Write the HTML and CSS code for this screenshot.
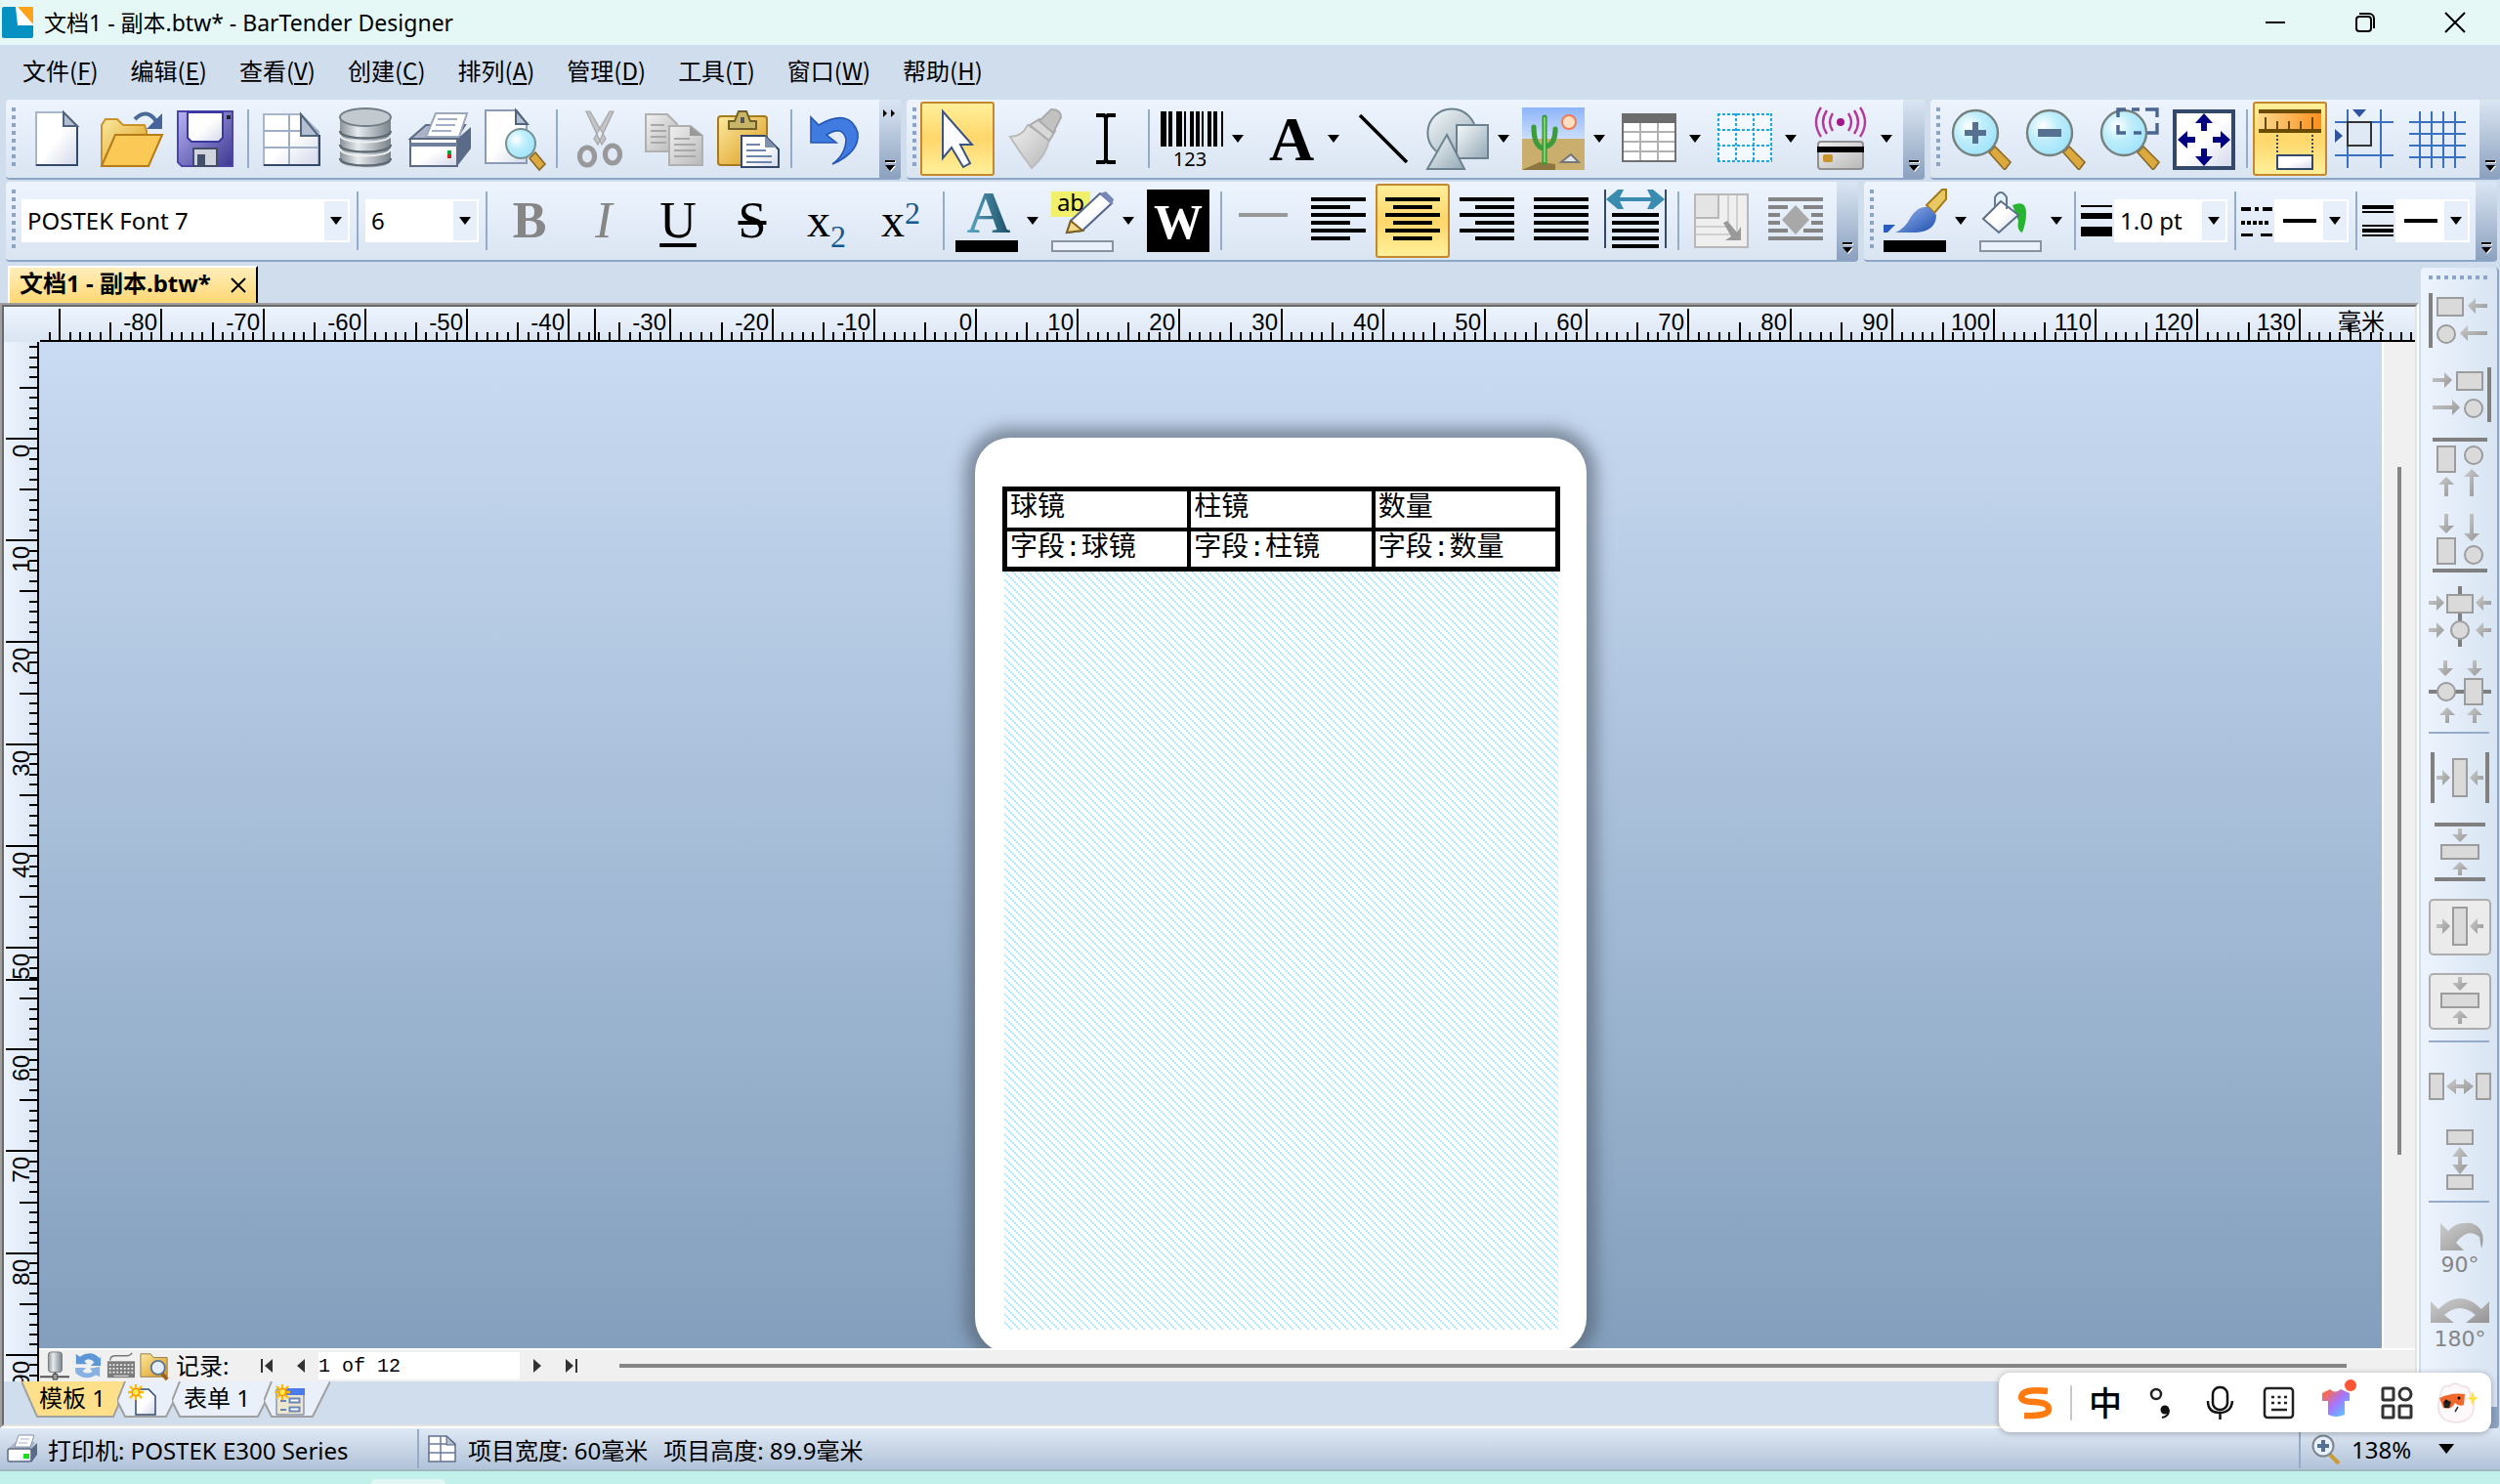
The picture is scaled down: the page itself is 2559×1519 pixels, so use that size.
FILE: index.html
```html
<!DOCTYPE html>
<html lang="zh-CN">
<head>
    <meta charset="UTF-8">
    <meta name="viewport" content="width=device-width, initial-scale=1.0">
    <title>文档1 - 副本.btw* - BarTender Designer</title>
    <link rel="stylesheet" href="styles.css">
</head>
<body>
    <!-- shared gradients and symbols -->
    <svg class="defs" aria-hidden="true">
        <defs>
            <linearGradient id="paper" x1="0" y1="0" x2="1" y2="1"><stop offset="0.5" stop-color="#fff"/><stop offset="1" stop-color="#d3d8ea"/></linearGradient>
            <linearGradient id="gold" x1="0" y1="0" x2="1" y2="1"><stop offset="0" stop-color="#fbe9a0"/><stop offset="1" stop-color="#dc9a1a"/></linearGradient>
            <linearGradient id="violet" x1="0" y1="0" x2="1" y2="1"><stop offset="0" stop-color="#b9b4f6"/><stop offset="1" stop-color="#3d3792"/></linearGradient>
            <linearGradient id="steel" x1="0" y1="0" x2="1" y2="0"><stop offset="0" stop-color="#8b9297"/><stop offset="0.35" stop-color="#e6ebee"/><stop offset="1" stop-color="#78828a"/></linearGradient>
            <linearGradient id="shape" x1="0" y1="0" x2="1" y2="1"><stop offset="0" stop-color="#f6fafc"/><stop offset="1" stop-color="#93a8b4"/></linearGradient>
            <linearGradient id="grey" x1="0" y1="0" x2="1" y2="1"><stop offset="0" stop-color="#f0f0f0"/><stop offset="1" stop-color="#b8b8b8"/></linearGradient>
            <linearGradient id="arrow" x1="0" y1="0" x2="1" y2="1"><stop offset="0" stop-color="#cdcdcd"/><stop offset="1" stop-color="#949494"/></linearGradient>
            <linearGradient id="blue" x1="0" y1="0" x2="1" y2="1"><stop offset="0" stop-color="#9db8f2"/><stop offset="1" stop-color="#1d4fae"/></linearGradient>
            <linearGradient id="teal" x1="0" y1="0" x2="1" y2="0"><stop offset="0" stop-color="#5aa9c9"/><stop offset="1" stop-color="#1c4c62"/></linearGradient>
            <linearGradient id="orange" x1="0" y1="0" x2="1" y2="0"><stop offset="0" stop-color="#fcd98c"/><stop offset="1" stop-color="#fb8e1e"/></linearGradient>
            <linearGradient id="sky" x1="0" y1="0" x2="0" y2="1"><stop offset="0" stop-color="#8db4fa"/><stop offset="1" stop-color="#cfe1fb"/></linearGradient>
            <linearGradient id="shirt" x1="0" y1="0" x2="1" y2="1"><stop offset="0.1" stop-color="#ff6a3c"/><stop offset="0.5" stop-color="#a773ff"/><stop offset="0.9" stop-color="#5cf"/></linearGradient>
            <radialGradient id="glass" cx="0.35" cy="0.35" r="0.7"><stop offset="0" stop-color="#fff"/><stop offset="0.45" stop-color="#bfeefb"/><stop offset="1" stop-color="#9fe3fb"/></radialGradient>
            <pattern id="hatch" width="8" height="8" patternUnits="userSpaceOnUse"><path d="M0 0h2v2H0zM2 2h2v2H2zM4 4h2v2H4zM6 6h2v2H6z" fill="#aeeaff"/></pattern>
        </defs>
        <symbol id="lens" viewBox="0 0 32 32">
            <path d="M20 23l3-3 8 8-3 4z" fill="#dca93e" stroke="#8a6a2a" stroke-width="0.8"/>
            <circle cx="13" cy="13" r="11.5" fill="url(#glass)" stroke="#76807c" stroke-width="1.2"/>
        </symbol>
        <symbol id="star" viewBox="0 0 16 16">
            <path d="M8 0v16M0 8h16M2 2l12 12M14 2L2 14" stroke="#fb0" stroke-width="2.4"/>
            <circle cx="8" cy="8" r="3.6" fill="#ffe94a" stroke="#ff8a00" stroke-width="1.4"/>
        </symbol>
    </svg>

    <header class="titlebar">
        <svg class="app-icon" viewBox="0 0 32 32"><rect width="32" height="32" rx="2" fill="#0592c3"/><path d="M14 0h18v19H16z" fill="#fff"/><path d="M16 0h16v18z" fill="#fda21b"/></svg>
        <h1 class="title">文档1 - 副本.btw* - BarTender Designer</h1>
        <div class="window-buttons">
            <button class="win-btn" aria-label="最小化"><svg viewBox="0 0 20 20"><path d="M0 10h20"/></svg></button>
            <button class="win-btn" aria-label="还原"><svg viewBox="0 0 20 20"><rect x="1" y="4" width="15" height="15" rx="3"/><path d="M4 1h10a5 5 0 0 1 5 5v10"/></svg></button>
            <button class="win-btn" aria-label="关闭"><svg viewBox="0 0 20 20"><path d="M0 0l20 20M20 0L0 20"/></svg></button>
        </div>
    </header>

    <nav class="menubar">
        <button>文件(<u>F</u>)</button>
        <button>编辑(<u>E</u>)</button>
        <button>查看(<u>V</u>)</button>
        <button>创建(<u>C</u>)</button>
        <button>排列(<u>A</u>)</button>
        <button>管理(<u>D</u>)</button>
        <button>工具(<u>T</u>)</button>
        <button>窗口(<u>W</u>)</button>
        <button>帮助(<u>H</u>)</button>
    </nav>

    <div class="toolbar-row">
        <div class="toolbar toolbar-clipped">
            <span class="grip"></span>
            <button class="tool" aria-label="新建"><svg viewBox="0 0 32 32"><path d="M5.500 2.500h14l7 7v20h-21z" fill="url(#paper)" stroke="#a9b5c9"/><path d="M19.500 2.500v7h7z" fill="#b3bfd3" stroke="#52637c"/><path d="M26.500 10v19.500h-21" fill="none" stroke="#34496a"/></svg></button>
            <button class="tool" aria-label="打开"><svg viewBox="0 0 32 32"><path d="M1 29V9l2-3h6l3 3h11l1 3v17z" fill="url(#gold)" stroke="#c9932a"/><path d="M1 30L8 14h24l-7 16z" fill="#fbc956" stroke="#b57c17"/><path d="M18 6q6-6 11 1" fill="none" stroke="#4b6a9a" stroke-width="2"/><path d="M32 3v8h-8z" fill="#46659a"/></svg></button>
            <button class="tool" aria-label="保存"><svg viewBox="0 0 32 32"><path d="M2 2h28v28H4l-2-2z" fill="url(#violet)" stroke="#4c45a8"/><path d="M7 2.500h18v13l-2 2H9l-2-2z" fill="url(#paper)" stroke="#3b37a0"/><path d="M10 21h12v9H10z" fill="#cfd4dd" stroke="#444c66"/><path d="M12 24h4v6h-4z" fill="#43506b"/><path d="M27 4h2v2h-2z" fill="#222"/></svg></button>
            <span class="sep"></span>
            <button class="tool" aria-label="页面设置"><svg viewBox="0 0 32 32"><path d="M2 3.500h19l9 9v17H2z" fill="url(#paper)" stroke="#a9b5c9"/><path d="M2 12h28M2 20.500h28M15 3.500v26" stroke="#a0aec4" stroke-width="1"/><path d="M21 3.500v11h9z" fill="#b3bfd3" stroke="#52637c"/><path d="M30.500 14v15.500H2" fill="none" stroke="#34496a"/></svg></button>
            <button class="tool" aria-label="数据库"><svg viewBox="0 0 32 32"><path d="M3 5v22c0 5 26 5 26 0V5z" fill="url(#steel)"/><path d="M3 19c0 5 26 5 26 0M3 26c0 5 26 5 26 0M3 12c0 5 26 5 26 0" fill="none" stroke="#5e6b75" stroke-width="1.200"/><path d="M3 21c0 5 26 5 26 0M3 14c0 5 26 5 26 0" fill="none" stroke="#eef2f4"/><ellipse cx="16" cy="5" rx="13" ry="4.500" fill="#c3cacf" stroke="#727d86"/></svg></button>
            <button class="tool" aria-label="打印"><svg viewBox="0 0 32 32"><path d="M1 16l8-7h20l-5 8z" fill="#aab4c6" stroke="#5b6b85"/><path d="M14 3h16l-4 12H9z" fill="#fff" stroke="#9aa7bd"/><path d="M15 6h10M14 9h10M12 12h10" stroke="#9fb0c8"/><path d="M24 17l8-7v11l-7 9z" fill="#5a6b88"/><path d="M1 16h24v14H1z" fill="url(#paper)" stroke="#5b6b85"/><path d="M1 18h24v2H1z" fill="#70809c"/><path d="M20 22h2v2h-2z" fill="#0a3"/><path d="M20 24h2v2h-2z" fill="#c22"/></svg></button>
            <button class="tool" aria-label="打印预览"><svg viewBox="0 0 32 32"><path d="M1.500 1.500h16l5 7v20h-21z" fill="url(#paper)" stroke="#8d9cb5"/><path d="M17 1.500v7h6z" fill="#b3bfd3" stroke="#52637c"/><path d="M24 26l3-3 5 6-3 3z" fill="#dca93e" stroke="#8a6a2a" stroke-width="0.800"/><ellipse cx="19.500" cy="18.500" rx="7.500" ry="7.500" fill="url(#glass)" stroke="#76908c"/></svg></button>
            <span class="sep"></span>
            <button class="tool" aria-label="剪切"><svg viewBox="0 0 32 32"><path d="M9 2l8 17 2-3L11 2zM23 2l-8 17-2-3L21 2z" fill="#c4c4c4" stroke="#a5a5a5" stroke-width="0.600"/><g fill="none" stroke="#999" stroke-width="2.600"><ellipse cx="9.500" cy="25" rx="3.800" ry="4.500"/><ellipse cx="22.500" cy="24" rx="3.800" ry="4.500"/></g></svg></button>
            <button class="tool" aria-label="复制"><svg viewBox="0 0 32 32"><g fill="url(#grey)" stroke="#b0b0b0"><path d="M1.500 3.500h11l5 5v14h-16z"/><path d="M13.500 9.500h11l6 5v15h-17z"/></g><path d="M4 9h7M4 12h8M4 15h8M4 18h8M16 16h8M16 19h11M16 22h11M16 25h11" stroke="#a8a8a8"/><path d="M24 9.500v5h6.500z" fill="#999"/></svg></button>
            <button class="tool" aria-label="粘贴"><svg viewBox="0 0 32 32"><rect x="0.500" y="4.500" width="25" height="25" rx="1.500" fill="url(#gold)" stroke="#a57c1d"/><path d="M6 11V7h3l2-5h4l2 5h3v4z" fill="#c9b467" stroke="#6f602b"/><path d="M12 5h2v3h-2z" fill="#555"/><path d="M12.500 14.500h12l7 7v9h-19z" fill="url(#paper)" stroke="#34496a"/><path d="M24.500 14.500v6h6z" fill="#7f91ac"/><path d="M15 19h7M15 22h10M15 25h13M15 28h13" stroke="#6f86ab"/></svg></button>
            <span class="sep"></span>
            <button class="tool" aria-label="撤消"><svg viewBox="0 0 32 32"><path d="M4 5v13h13l-5-4q8-5 10 2 0 8-7 13 14-6 13-16Q24 0 8 9z" fill="#3f7be0" stroke="#2457b4" stroke-width="0.800"/></svg></button>
            <button class="overflow" aria-label="更多按钮"><svg viewBox="0 0 22 80"><path d="M4 10l4 4-4 4zM12 10l4 4-4 4z" fill="#000"/><path d="M7 63h10v2H7zM7 68h10l-5 6z" class="tri-shadow"/><path d="M6 62h10v2H6zM6 67h10l-5 6z"/></svg></button>
        </div>

        <div class="toolbar">
            <span class="grip"></span>
            <button class="tool active" aria-label="选择"><svg viewBox="0 0 32 32"><path d="M8.500 2v24l4.500-5.500 6 10 3.500-2-5-9.500h6z" fill="#fdfdff" stroke="#3b5480"/></svg></button>
            <button class="tool" aria-label="格式刷"><svg viewBox="0 0 32 32"><path d="M5 15q6 0 9-6l11 7q-1 8-9 15-6-8-11-16z" fill="url(#grey)" stroke="#bbb"/><path d="M15 9l5-3 8 6-3 5z" fill="#d8d8d8" stroke="#aaa"/><path d="M20 7l6-6q5 0 5 4l-4 8z" fill="#c2c2c2" stroke="#aaa"/></svg></button>
            <button class="tool" aria-label="文本光标"><svg viewBox="0 0 32 32"><path d="M11 4h4l1 1 1-1h4M11 28h4l1-1 1 1h4M16 5v22" fill="none" stroke="#000" stroke-width="2"/></svg></button>
            <span class="sep"></span>
            <button class="tool drop" aria-label="条形码"><svg viewBox="0 0 32 32"><path d="M0 2h3v18H0zM4 2h2v18H4zM8 2h3v18H8zM12 2h1v18h-1zM15 2h2v18h-2zM18 2h2v18h-2zM21 2h1v18h-1zM24 2h2v18h-2zM27 2h2v18h-2zM31 2h1v18h-1z"/><text x="15" y="30" font-size="10" text-anchor="middle">123</text></svg><i class="tri"></i></button>
            <button class="tool drop" aria-label="文本"><svg viewBox="0 0 32 32"><text x="18" y="27" class="serif" font-size="32" font-weight="700" text-anchor="middle">A</text></svg><i class="tri"></i></button>
            <button class="tool" aria-label="线条"><svg viewBox="0 0 32 32"><path d="M4 4l24 24" stroke="#000" stroke-width="1.800"/></svg></button>
            <button class="tool drop" aria-label="形状"><svg viewBox="0 0 32 32"><g fill="url(#shape)" stroke="#6d8291"><circle cx="13" cy="13" r="12.300"/><path d="M15.500 9h16v17h-16z"/><path d="M10.500 14l9 17.500h-19z"/></g></svg><i class="tri"></i></button>
            <button class="tool drop" aria-label="图片"><svg viewBox="0 0 32 32"><path d="M0 0h32v17H0z" fill="url(#sky)"/><path d="M0 16h32v16H0z" fill="#c9ae6d"/><path d="M0 32l9-4 8 1v3z" fill="#8d7640"/><circle cx="24" cy="7.500" r="3.500" fill="#fde0c0" stroke="#f37a52"/><path d="M11.500 28V5M11 21q-5-1-5-11M12 20q5-1 5-9" fill="none" stroke="#3c9c3c" stroke-width="2.600" stroke-linecap="round"/><path d="M11.500 28V5" stroke="#7ed36a"/><path d="M20 28l5-4 4 4z" fill="#e3e3ea" stroke="#777"/></svg><i class="tri"></i></button>
            <button class="tool drop" aria-label="表格"><svg viewBox="0 0 32 32"><path d="M2.500 3.500h27v24h-27z" fill="#fff" stroke="#707070"/><path d="M2 3h28v5H2z" fill="#6c6c6c"/><path d="M3 12.500h26M3 17.500h26M3 22.500h26M11.500 8v19M20.500 8v19" stroke="#b0b0b0"/></svg><i class="tri"></i></button>
            <button class="tool drop" aria-label="布局网格"><svg viewBox="0 0 32 32"><path d="M2 3h28v25H2z" fill="#f4f9ff"/><path d="M2 3.500h28M2 11.500h28M2 19.500h28M2 27.500h28M2.500 3v25M11.500 3v25M20.500 3v25M29.500 3v25" stroke="#1ba9e6" stroke-dasharray="1.500 1"/></svg><i class="tri"></i></button>
            <button class="tool drop" aria-label="编码器"><svg viewBox="0 0 32 32"><g fill="none" stroke="#b33a9a" stroke-width="1.200"><path d="M12 3q-3 4.500 0 9M20 3q3 4.500 0 9M9 1.500q-4 6 0 12M23 1.500q4 6 0 12M6 0q-5 7.500 0 15M26 0q5 7.500 0 15"/></g><circle cx="16" cy="7.500" r="2" fill="#a4178a"/><rect x="4.500" y="17.500" width="23" height="14" rx="1.500" fill="url(#grey)" stroke="#909090"/><path d="M4 20h24v3H4z"/><rect x="7" y="24" width="5" height="4" rx="1" fill="#c8932b"/></svg><i class="tri"></i></button>
            <button class="overflow" aria-label="更多按钮"><svg viewBox="0 0 22 80"><path d="M7 63h10v2H7zM7 68h10l-5 6z" class="tri-shadow"/><path d="M6 62h10v2H6zM6 67h10l-5 6z"/></svg></button>
        </div>

        <div class="toolbar">
            <span class="grip"></span>
            <button class="tool" aria-label="放大"><svg viewBox="0 0 32 32"><use href="#lens"/><path d="M11.500 7.500h3v4h4v3h-4v4h-3v-4h-4v-3h4z" fill="#56708f"/></svg></button>
            <button class="tool" aria-label="缩小"><svg viewBox="0 0 32 32"><use href="#lens"/><path d="M7 11h12v4H7z" fill="#56708f"/></svg></button>
            <button class="tool" aria-label="缩放到所选"><svg viewBox="0 0 32 32"><use href="#lens"/><path d="M10 5V1h4M17 1h4M24 1h6v4M30 8v5h-5M22 13h-4M14 13h-4V9" fill="none" stroke="#4a6690" stroke-width="1.700"/></svg></button>
            <button class="tool" aria-label="适合窗口"><svg viewBox="0 0 32 32"><path d="M1 2h30v29H1z" fill="url(#paper)" stroke="#34496a" stroke-width="2"/><path d="M16 3l4.500 5h-3v4h-3V8h-3zM16 30l4.500-5h-3v-4h-3v4h-3zM2.500 16.500l5-4.500v3h4v3h-4v3zM29.500 16.500l-5-4.500v3h-4v3h4v3z" fill="#000080"/></svg></button>
            <span class="sep"></span>
            <button class="tool active" aria-label="标尺"><svg viewBox="0 0 32 32"><path d="M0 2h32v10H0z" fill="url(#orange)"/><path d="M0 1h32v2H0zM0 11h32v2H0z" fill="#6a4b00"/><path d="M3.500 5v6M9.500 7v4M15.500 7v4M21.500 7v4M27.500 5v6" stroke="#6a4b00"/><path d="M9.500 14v10M27.500 14v10" stroke="#34496a" stroke-dasharray="1 1"/><path d="M9.500 24.500h18v7h-18z" fill="url(#paper)" stroke="#34496a"/></svg></button>
            <button class="tool" aria-label="对齐参考线"><svg viewBox="0 0 32 32"><path d="M7.500 1v30M24.500 1v30M1 7.500h30M1 24.500h30" stroke="#3a70c0"/><path d="M10 1h7l-3.500 4zM1 11l4 3.500-4 3.500z" fill="#2f55a0"/><path d="M7.500 7.500h12v12h-12z" fill="#dfe8f5" stroke="#333"/></svg></button>
            <button class="tool" aria-label="网格"><svg viewBox="0 0 32 32"><path d="M6.500 2v29M12.500 2v29M18.500 2v29M24.500 2v29M1 7.500h29M1 13.500h29M1 19.500h29M1 25.500h29" stroke="#3a70c0"/></svg></button>
            <button class="overflow" aria-label="更多按钮"><svg viewBox="0 0 22 80"><path d="M7 63h10v2H7zM7 68h10l-5 6z" class="tri-shadow"/><path d="M6 62h10v2H6zM6 67h10l-5 6z"/></svg></button>
        </div>
    </div>

    <div class="toolbar-row">
        <div class="toolbar">
            <span class="grip"></span>
            <label class="combo combo-font"><select aria-label="字体"><option>POSTEK Font 7</option></select><span class="combo-arrow"><i class="tri"></i></span></label>
            <span class="sep"></span>
            <label class="combo"><select aria-label="字号"><option>6</option></select><span class="combo-arrow"><i class="tri"></i></span></label>
            <span class="sep"></span>
            <button class="tool glyph dim bold">B</button>
            <button class="tool glyph dim italic">I</button>
            <button class="tool glyph under">U</button>
            <button class="tool glyph strike">S</button>
            <button class="tool glyph script">x<sub>2</sub></button>
            <button class="tool glyph script">x<sup>2</sup></button>
            <span class="sep"></span>
            <button class="tool drop" aria-label="字体颜色"><svg viewBox="0 0 32 32"><text x="17" y="22" class="serif" font-size="31" font-weight="700" text-anchor="middle" fill="url(#teal)">A</text><path d="M0 26h32v6H0z"/></svg><i class="tri"></i></button>
            <button class="tool drop" aria-label="突出显示"><svg viewBox="0 0 32 32"><path d="M0 1h20v13H0z" fill="#f0f06a"/><text x="10" y="11" font-size="12" text-anchor="middle">ab</text><path d="M8 22l2-6L25 2l6 5-15 14z" fill="url(#paper)" stroke="#55648c"/><path d="M8 22l2-6 6 5z" fill="#f5d888" stroke="#7d6222"/><path d="M25 2l3-1 4 4-1 3z" fill="#7886b8"/><path d="M0.500 26.500h31v5h-31z" fill="#ebf1fa" stroke="#8892a0"/></svg><i class="tri"></i></button>
            <button class="tool" aria-label="反白"><svg viewBox="0 0 32 32"><path d="M0 0h32v32H0z"/><text x="16" y="25" class="serif" font-size="25" font-weight="700" text-anchor="middle" fill="#fff">W</text></svg></button>
            <span class="sep"></span>
            <button class="tool" aria-label="分隔线"><svg viewBox="0 0 32 32"><path d="M3 13h25" stroke="#999" stroke-width="2"/></svg></button>
            <button class="tool" aria-label="左对齐"><svg viewBox="0 0 32 32"><path d="M2 5h28M2 9h20M2 13h28M2 17h20M2 21h28M2 25h20" class="rows"/></svg></button>
            <button class="tool active" aria-label="居中"><svg viewBox="0 0 32 32"><path d="M2 5h28M6 9h20M2 13h28M6 17h20M2 21h28M6 25h20" class="rows"/></svg></button>
            <button class="tool" aria-label="右对齐"><svg viewBox="0 0 32 32"><path d="M2 5h28M10 9h20M2 13h28M10 17h20M2 21h28M10 25h20" class="rows"/></svg></button>
            <button class="tool" aria-label="两端对齐"><svg viewBox="0 0 32 32"><path d="M2 5h28M2 9h28M2 13h28M2 17h28M2 21h28M2 25h28" class="rows"/></svg></button>
            <button class="tool" aria-label="完全对齐"><svg viewBox="0 0 32 32"><path d="M0.500 0v30M31.500 0v30" stroke="#34496a"/><path d="M4 13h24M4 17h24M4 21h24M4 25h24M4 29h24" class="rows"/><path d="M1 5l6-5h3L8 4h16l-2-4h3l6 5-6 5h-3l2-4H8l2 4H7z" fill="#3a8bb0"/></svg></button>
            <span class="sep"></span>
            <button class="tool" aria-label="自动调整"><svg viewBox="0 0 32 32"><path d="M2.500 2.500h27v27h-27z" fill="#efefef" stroke="#b8b8b8"/><path d="M19.500 3v16H3M24 3v20H3" fill="none" stroke="#d0d0d0"/><path d="M2.500 2.500h12v12h-12z" fill="#e4e4e4" stroke="#b8b8b8"/><path d="M17 17l2-1 5 6 2-3v7h-8l3-2z" fill="#999"/></svg></button>
            <button class="tool" aria-label="环绕"><svg viewBox="0 0 32 32"><path d="M2 5h28M2 9h10M20 9h10M2 13h6M24 13h6M2 17h6M24 17h6M2 21h10M20 21h10M2 25h28" class="rows dim-rows"/><path d="M16 8l7 7.500-7 7.500-7-7.500z" fill="#a8a8a8"/></svg></button>
            <button class="overflow" aria-label="更多按钮"><svg viewBox="0 0 22 80"><path d="M7 63h10v2H7zM7 68h10l-5 6z" class="tri-shadow"/><path d="M6 62h10v2H6zM6 67h10l-5 6z"/></svg></button>
        </div>

        <div class="toolbar">
            <span class="grip"></span>
            <button class="tool drop" aria-label="线条颜色"><svg viewBox="0 0 32 32"><path d="M22 8l8-8h2v5l-6 7z" fill="#e8c860" stroke="#a5781c"/><path d="M6 22q5-2 8-8 4-6 9-5l4 4q0 8-10 9z" fill="url(#blue)"/><path d="M0 18h6l-4 4H0z" fill="#2a5cc0"/><path d="M0 26h32v6H0z"/></svg><i class="tri"></i></button>
            <button class="tool drop" aria-label="填充颜色"><svg viewBox="0 0 32 32"><path d="M17 8q7-3 7 4 0 5-2 10-3-1-2-6z" fill="#27b531"/><path d="M2 15l9-9 9 7-10 9z" fill="url(#paper)" stroke="#5e6f88"/><path d="M8 9V4q3-5 6 0v6" fill="none" stroke="#66788f"/><path d="M0.500 26.500h31v5h-31z" fill="#ebf1fa" stroke="#8892a0"/></svg><i class="tri"></i></button>
            <span class="sep"></span>
            <svg class="combo-icon" viewBox="0 0 32 32"><path d="M0 0h32v2H0zM0 8h32v6H0zM0 22h32v10H0z"/></svg>
            <label class="combo"><select aria-label="线条粗细"><option>1.0 pt</option></select><span class="combo-arrow"><i class="tri"></i></span></label>
            <span class="sep"></span>
            <svg class="combo-icon" viewBox="0 0 32 32"><path d="M0 2h10v4H0zM14 2h4v4h-4zM22 2h10v4H22zM0 16h4v4H0zM6 16h4v4H6zM12 16h4v4h-4zM18 16h4v4h-4zM24 16h4v4h-4zM0 29h12v3H0zM20 29h12v3H20z"/></svg>
            <label class="combo combo-line"><select aria-label="虚线样式"><option aria-label="实线"></option></select><span class="combo-arrow"><i class="tri"></i></span></label>
            <span class="sep"></span>
            <svg class="combo-icon" viewBox="0 0 32 32"><path d="M0 0h32v4H0zM0 6h32v2H0zM0 20h32v2H0zM0 24h32v4H0zM0 30h32v2H0z"/></svg>
            <label class="combo combo-line"><select aria-label="复合线样式"><option aria-label="单线"></option></select><span class="combo-arrow"><i class="tri"></i></span></label>
            <button class="overflow" aria-label="更多按钮"><svg viewBox="0 0 22 80"><path d="M7 63h10v2H7zM7 68h10l-5 6z" class="tri-shadow"/><path d="M6 62h10v2H6zM6 67h10l-5 6z"/></svg></button>
        </div>
    </div>

    <div class="workspace">
        <main class="document">
            <div class="doc-tabs">
                <div class="doc-tab">
                    <button class="doc-name">文档1 - 副本.btw*</button>
                    <button class="doc-close" aria-label="关闭文档"><svg viewBox="0 0 16 16"><path d="M1 1l14 14M15 1L1 15"/></svg></button>
                </div>
            </div>
            <div class="frame">
                <div class="frame-inner">
                    <svg class="ruler ruler-top" id="ruler-top"></svg>
                    <svg class="ruler ruler-left" id="ruler-left"></svg>
                    <div class="canvas">
                        <div class="label-sheet">
                            <table class="label-table">
                                <tr><td>球镜</td><td>柱镜</td><td>数量</td></tr>
                                <tr><td>字段:球镜</td><td>字段:柱镜</td><td>字段:数量</td></tr>
                            </table>
                            <svg class="hatch"><rect width="100%" height="100%" fill="url(#hatch)"/></svg>
                        </div>
                    </div>
                    <div class="vscroll"><span class="vthumb"></span></div>
                    <div class="record-bar">
                        <button aria-label="数据库"><svg viewBox="0 0 32 32"><rect x="9" y="1" width="15" height="22" rx="3" fill="url(#steel)" stroke="#777"/><path d="M16.500 23v6M0 28h32" stroke="#555" stroke-width="2"/><path d="M14 25h5v6h-5z" fill="#999" stroke="#444"/></svg></button>
                        <button aria-label="刷新"><svg viewBox="0 0 32 32"><path d="M3 14V3l4 3Q20-2 29 8l1-3v11H19l4-4q-6-6-11-1l3 3z" fill="#5e97d6"/><path d="M29 17v11l-4-2Q12 33 3 24v3l-1-9h12l-4 4q6 4 11 0l-3-3z" fill="#87b1e0"/></svg></button>
                        <button aria-label="键盘"><svg viewBox="0 0 32 32"><path d="M4 10q0-5 6-5h12q4 0 6-3" fill="none" stroke="#777" stroke-width="1.500"/><path d="M1 11h30v18H1z" fill="#7c7c7c"/><path d="M3 15h26M3 19h26M3 23h26" stroke="#eee" stroke-width="2" stroke-dasharray="2 2"/><path d="M8 27h16" stroke="#eee"/></svg></button>
                        <button aria-label="浏览记录"><svg viewBox="0 0 32 32"><path d="M1 28V3h11l3 4h15v21z" fill="url(#gold)" stroke="#8e774a"/><path d="M24 24l6 7" stroke="#a0601c" stroke-width="4"/><circle cx="20" cy="18" r="7.500" fill="#e4eefc" stroke="#607590" stroke-width="2"/></svg></button>
                        <label class="record-label" for="record">记录:</label>
                        <button aria-label="第一条"><svg viewBox="0 0 16 16"><path d="M1 1h2v14H1zM13 1v14L5 8z"/></svg></button>
                        <button aria-label="上一条"><svg viewBox="0 0 16 16"><path d="M12 1v14L4 8z"/></svg></button>
                        <input id="record" type="text" value="1 of 12">
                        <button aria-label="下一条"><svg viewBox="0 0 16 16"><path d="M4 1v14l8-7z"/></svg></button>
                        <button aria-label="最后一条"><svg viewBox="0 0 16 16"><path d="M13 1h2v14h-2zM3 1v14l8-7z"/></svg></button>
                        <span class="hthumb"></span>
                    </div>
                    <div class="sheet-tabs">
                        <button class="sheet-tab sheet-active"><svg class="tab-shape" viewBox="0 0 110 37" preserveAspectRatio="none"><path d="M0 0l16 36h78l16-36"/></svg><span>模板 1</span></button>
                        <button class="sheet-tab sheet-new" aria-label="新建模板"><svg class="tab-shape" viewBox="0 0 68 37" preserveAspectRatio="none"><path d="M8 0L0 20l8 16h42L68 0"/></svg><svg class="tab-icon" viewBox="0 0 32 32"><path d="M8 5h13l7 7v19H8z" fill="url(#paper)" stroke="#34496a" stroke-width="1.500"/><use href="#star" x="0" y="0" width="16" height="16"/></svg></button>
                        <button class="sheet-tab sheet-form"><svg class="tab-shape" viewBox="0 0 106 37" preserveAspectRatio="none"><path d="M8 0L0 20l8 16h80l18-36"/></svg><span>表单 1</span></button>
                        <button class="sheet-tab sheet-new" aria-label="新建表单"><svg class="tab-shape" viewBox="0 0 68 37" preserveAspectRatio="none"><path d="M8 0L0 20l8 16h42L68 0"/></svg><svg class="tab-icon" viewBox="0 0 32 32"><path d="M2 5h28v26H2z" fill="#ece6cf" stroke="#5a6f96"/><path d="M10 4h21v7H10z" fill="#4b7bea"/><path d="M15.500 14.500h10v4h-10zM15.500 23.500h10v4h-10zM6 17h6M6 26h6" fill="#fff" stroke="#6a86b8" stroke-width="2"/><use href="#star" x="0" y="0" width="16" height="16"/></svg></button>
                    </div>
                </div>
            </div>
        </main>

        <aside class="align-bar">
            <span class="grip grip-h"></span>
            <button class="tool" aria-label="左边对齐"><svg viewBox="0 0 32 32"><path class="bar" d="M0 3h2v28H0z"/><path class="box" d="M4.500 5.500h13v9h-13z"/><circle class="box" cx="9" cy="24" r="4.500"/><path class="arr" d="M30 8.500h-6v-3l-4 4 4 4v-3h6z"/><path class="arr" d="M30 22.500H20v-3l-4 4 4 4v-3h10z"/></svg></button>
            <button class="tool" aria-label="右边对齐"><svg viewBox="0 0 32 32"><path class="bar" d="M30 3h2v28h-2z"/><path class="box" d="M14.500 5.500h13v9h-13z"/><circle class="box" cx="23" cy="24" r="4.500"/><path class="arr" d="M2 8.500h6v-3l4 4-4 4v-3H2z"/><path class="arr" d="M2 22.500h10v-3l4 4-4 4v-3H2z"/></svg></button>
            <button class="tool" aria-label="顶端对齐"><svg viewBox="0 0 32 32"><path class="bar" d="M2 1h28v2H2z"/><path class="box" d="M4.500 5.500h9v13h-9z"/><circle class="box" cx="23" cy="10" r="4.500"/><path class="arr" d="M8 31v-6H5l4-4 4 4h-3v6z"/><path class="arr" d="M21 31V21h-3l4-4 4 4h-3v10z"/></svg></button>
            <button class="tool" aria-label="底端对齐"><svg viewBox="0 0 32 32"><path class="bar" d="M2 30h28v2H2z"/><path class="box" d="M4.500 14.500h9v13h-9z"/><circle class="box" cx="23" cy="23" r="4.500"/><path class="arr" d="M8 2v6H5l4 4 4-4h-3V2z"/><path class="arr" d="M21 2v10h-3l4 4 4-4h-3V2z"/></svg></button>
            <button class="tool" aria-label="垂直中线对齐"><svg viewBox="0 0 32 32"><path class="bar" d="M15 1h2v31h-2z"/><path class="box" d="M9.500 5.500h13v9h-13z"/><circle class="box" cx="16" cy="23.500" r="4.500"/><path class="arr" d="M0 8.500h4v-3l4 4-4 4v-3H0z"/><path class="arr" d="M32 8.500h-4v-3l-4 4 4 4v-3h4z"/><path class="arr" d="M0 22.500h4v-3l4 4-4 4v-3H0z"/><path class="arr" d="M32 22.500h-4v-3l-4 4 4 4v-3h4z"/></svg></button>
            <button class="tool" aria-label="水平中线对齐"><svg viewBox="0 0 32 32"><path class="bar" d="M0 16h32v2H0z"/><circle class="box" cx="9" cy="17" r="4.500"/><path class="box" d="M18.500 10.500h9v13h-9z"/><path class="arr" d="M7.500 1v4h-3l4 4 4-4h-3V1z"/><path class="arr" d="M22.500 1v4h-3l4 4 4-4h-3V1z"/><path class="arr" d="M8.500 33v-4h-3l4-4 4 4h-3v4z"/><path class="arr" d="M22.500 33v-4h-3l4-4 4 4h-3v4z"/></svg></button>
            <span class="sep-h"></span>
            <button class="tool" aria-label="水平居中于模板"><svg viewBox="0 0 32 32"><path class="bar" d="M1 4h2v26H1zM29 4h2v26h-2z"/><path class="box" d="M12.500 7.500h7v19h-7z"/><path class="arr" d="M4 16h3v-3l4 4-4 4v-3H4z"/><path class="arr" d="M28 16h-3v-3l-4 4 4 4v-3h3z"/></svg></button>
            <button class="tool" aria-label="垂直居中于模板"><svg viewBox="0 0 32 32"><path class="bar" d="M3 2h26v2H3zM3 30h26v2H3z"/><path class="box" d="M6.500 13.500h19v7h-19z"/><path class="arr" d="M15 5v3h-3l4 4 4-4h-3V5z"/><path class="arr" d="M15 29v-3h-3l4-4 4 4h-3v3z"/></svg></button>
            <button class="tool" aria-label="水平居中于表格"><svg viewBox="0 0 32 32"><rect class="plate" x="0.500" y="3.500" width="31" height="28" rx="2"/><path class="box" d="M12.500 7.500h7v19h-7z"/><path class="arr" d="M4 16h3v-3l4 4-4 4v-3H4z"/><path class="arr" d="M28 16h-3v-3l-4 4 4 4v-3h3z"/></svg></button>
            <button class="tool" aria-label="垂直居中于表格"><svg viewBox="0 0 32 32"><rect class="plate" x="0.500" y="3.500" width="31" height="28" rx="2"/><path class="box" d="M6.500 13.500h19v7h-19z"/><path class="arr" d="M15 5v3h-3l4 4 4-4h-3V5z"/><path class="arr" d="M15 29v-3h-3l4-4 4 4h-3v3z"/></svg></button>
            <span class="sep-h"></span>
            <button class="tool" aria-label="横向分布"><svg viewBox="0 0 32 32"><path class="box" d="M0.500 10.500h7v13h-7zM24.500 10.500h7v13h-7z"/><path class="arr" d="M9 17l5-4v3h4v-3l5 4-5 4v-3h-4v3z"/></svg></button>
            <button class="tool" aria-label="纵向分布"><svg viewBox="0 0 32 32"><path class="box" d="M9.500 1.500h13v7h-13zM9.500 24.500h13v7h-13z"/><path class="arr" d="M16 10l4 5h-3v4h3l-4 5-4-5h3v-4h-3z"/></svg></button>
            <span class="sep-h"></span>
            <button class="tool" aria-label="旋转 90 度"><svg viewBox="0 0 32 32"><path class="arr" d="M6 5v14h12l-4-4q6-8 12-3l1 6q3-10-5-13-8-1-12 4z"/><text class="deg" x="16" y="30">90°</text></svg></button>
            <button class="tool" aria-label="旋转 180 度"><svg viewBox="0 0 32 32"><path class="arr" d="M1 7v11h12l-5-4q8-7 16 0l-5 4h12V7l-4 4q-11-11-22 0z"/><text class="deg" x="16" y="30">180°</text></svg></button>
            <span class="align-end"></span>
        </aside>
    </div>

    <footer class="statusbar">
        <div class="status-cell status-printer">
            <svg viewBox="0 0 32 32"><path d="M1 16l8-7h20l-4 8z" fill="#aab4c6"/><path d="M12 2h16l-4 12H8z" fill="#fff" stroke="#8896ad"/><path d="M14 6h9M12 10h9" stroke="#9fb0c8"/><path d="M24 17l7-7v12l-6 8z" fill="#5a6b88"/><rect x="1" y="16" width="24" height="13" rx="2" fill="url(#paper)" stroke="#5b6b85" stroke-width="1.500"/><path d="M17 21h6v5h-6z" fill="#1ed81e"/></svg>
            <span>打印机: POSTEK E300 Series</span>
        </div>
        <div class="status-cell status-size">
            <svg viewBox="0 0 32 32"><path d="M2 3h18l9 8v18H2z" fill="#fff" stroke="#5e7090" stroke-width="1.500"/><path d="M2 11h27M2 20h27M14 3v26" stroke="#6a7c9a" stroke-width="1.500"/><path d="M20 3v9h9z" fill="#b3bfd3" stroke="#52637c"/></svg>
            <span>项目宽度: 60毫米</span>
            <span>项目高度: 89.9毫米</span>
        </div>
        <button class="status-cell status-zoom">
            <svg viewBox="0 0 32 32"><path d="M20 22l9 9" stroke="#c99a35" stroke-width="4"/><circle cx="13" cy="13" r="10.500" fill="#e8f0fc" stroke="#7d868e" stroke-width="2"/><path d="M11 7h4v4h4v4h-4v4h-4v-4H7v-4h4z" fill="#56708f"/></svg>
            <span>138%</span>
            <i class="tri"></i>
        </button>
    </footer>
    <div class="taskbar"><span class="taskbar-item"></span></div>

    <!-- input method bar floats over the window -->
    <div class="ime">
        <button class="ime-logo" aria-label="搜狗输入法"><svg viewBox="0 0 36 36"><path d="M31 6Q5 3 4 12q0 5 14 5 15 1 14 8-1 7-25 6" fill="none" stroke="#ff7a0f" stroke-width="6.500"/></svg></button>
        <span class="ime-sep"></span>
        <button class="ime-zh">中</button>
        <button aria-label="标点"><svg viewBox="0 0 36 36"><circle cx="10" cy="9" r="5" fill="none" stroke="#222" stroke-width="2.500"/><circle cx="19" cy="25" r="4.500" fill="#111"/><path d="M23 25q0 7-7 8" fill="none" stroke="#111" stroke-width="2"/></svg></button>
        <button aria-label="语音"><svg viewBox="0 0 36 36"><g fill="none" stroke="#111" stroke-width="2.500"><rect x="8" y="2" width="15" height="23" rx="7"/><path d="M3 16q0 12 12 12t13-12M15.500 28v7"/></g></svg></button>
        <button aria-label="键盘"><svg viewBox="0 0 36 36"><rect x="1" y="3" width="29" height="30" rx="3" fill="none" stroke="#222" stroke-width="2.500"/><path d="M8 12h16M8 18h16" stroke="#222" stroke-width="2.500" stroke-dasharray="3 3.500"/><path d="M8 25h16" stroke="#222" stroke-width="2.500"/></svg></button>
        <button aria-label="皮肤"><svg viewBox="0 0 36 36"><path d="M0 8l8-4q5 5 11 0l9 4v8h-5v14q-9 4-17 0V16H0z" fill="url(#shirt)"/><circle cx="29" cy="0" r="6" fill="#ff5534"/></svg></button>
        <button aria-label="工具箱"><svg viewBox="0 0 36 36"><g fill="none" stroke="#333" stroke-width="3"><rect x="2" y="3" width="11" height="12" rx="1"/><circle cx="25" cy="9" r="6"/><rect x="2" y="21" width="11" height="12" rx="1"/><rect x="19" y="21" width="12" height="12" rx="1"/></g></svg></button>
        <button aria-label="智能助手"><svg class="ime-pet" viewBox="0 0 44 44"><path d="M6 10q2-7 8-5 6-6 12 0 8-1 9 6l4 10q2 20-18 21Q1 41 3 22z" fill="#fdf8fa" stroke="#f3dde3" stroke-width="1.500"/><path d="M4 17q12-6 26-4l-1 11q-5 2-9-2-4 8-12 5z" fill="#f0682a"/><path d="M8 21q4-3 8 0l-2 6H9z" fill="#222"/><circle cx="11" cy="20" r="1.500"/><circle cx="24" cy="17" r="1.500"/><path d="M20 31l3-5" stroke="#333" stroke-width="1.500"/><path d="M38 10l2 6 4 1-4 2-2 6-2-6-4-2 4-1z" fill="#ffe24a"/></svg></button>
    </div>

    <script src="rulers.js"></script>
</body>
</html>
```
FILE: styles.css
```css
* {
    box-sizing: border-box;
}
body {
    margin: 0;
    height: 100vh;
    display: flex;
    flex-direction: column;
    overflow: hidden;
    background-color: #d0dded;
    color: #000;
    font-family: "Noto Sans", "Noto Sans CJK SC", sans-serif;
    font-size: 24px;
}
button {
    margin: 0;
    padding: 0;
    border: none;
    background: none;
    color: inherit;
    font: inherit;
}
svg {
    display: block;
}
.defs {
    position: absolute;
    width: 0;
    height: 0;
}
.serif {
    font-family: "Liberation Serif", serif;
}

/* title and menu */
.titlebar {
    flex: none;
    height: 46px;
    display: flex;
    align-items: center;
    padding-left: 2px;
    background-color: #e5f8f5;
}
.app-icon {
    width: 32px;
    height: 32px;
}
.title {
    flex: 1;
    margin: 0 0 0 11px;
    font-size: 23px;
    font-weight: 400;
    line-height: 44px;
}
.window-buttons {
    display: flex;
}
.win-btn {
    width: 92px;
    height: 46px;
    display: flex;
    align-items: center;
    justify-content: center;
}
.win-btn svg {
    width: 20px;
    height: 20px;
    overflow: visible;
    fill: none;
    stroke: #000;
    stroke-width: 2;
}
.menubar {
    flex: none;
    height: 56px;
    display: flex;
    align-items: center;
    gap: 33px;
    padding: 0 0 6px 23px;
    font-family: "Noto Sans CJK SC", sans-serif;
    font-size: 24px;
}
.menubar u {
    text-underline-offset: 3px;
}

/* toolbars */
.toolbar-row {
    flex: none;
    display: flex;
    gap: 6px;
    height: 82px;
    margin-bottom: 2px;
    padding-left: 6px;
}
.toolbar-row + .toolbar-row {
    margin-bottom: 0;
}
.toolbar {
    display: flex;
    align-items: center;
    border-bottom: 2px solid #8da5c4;
    border-radius: 4px;
    background: linear-gradient(#edf4fe, #dae5f2);
}
.grip {
    align-self: stretch;
    width: 4px;
    margin: 8px 4px 10px 6px;
    background: repeating-linear-gradient(#8da5c4 0, #8da5c4 4px, transparent 4px, transparent 8px);
}
.grip-h {
    width: auto;
    height: 4px;
    margin: 8px 8px 2px;
    background: repeating-linear-gradient(90deg, #8da5c4 0, #8da5c4 4px, transparent 4px, transparent 8px);
}
.tool {
    flex: none;
    width: 76px;
    height: 76px;
    padding: 6px;
    display: flex;
    align-items: center;
}
.tool svg {
    flex: none;
    width: 64px;
    height: 64px;
    overflow: visible;
}
.tool.drop {
    width: 98px;
    gap: 9px;
}
.tool.active {
    padding: 4px;
    border: 2px solid #c7872c;
    border-radius: 3px;
    background: linear-gradient(#ffef9a, #ffd66a 50%, #fff09a);
}
.tri {
    flex: none;
    width: 12px;
    height: 8px;
    background-color: #000;
    clip-path: polygon(0 0, 100% 0, 50% 100%);
}
.sep {
    flex: none;
    width: 2px;
    height: 60px;
    margin: 0 5px;
    background-color: #94abc9;
}
.overflow {
    align-self: stretch;
    width: 22px;
    margin-left: 4px;
    border-radius: 0 4px 0 0;
    background: linear-gradient(#dbe6f3, #8ba1bf);
}
.toolbar-clipped .overflow {
    margin-left: 8px;
}
.overflow svg {
    width: 22px;
    height: 80px;
}
.tri-shadow {
    fill: #fff;
}
.rows {
    stroke: #000;
    stroke-width: 2;
}
.dim-rows {
    stroke: #858585;
}
.glyph {
    justify-content: center;
    font-family: "Liberation Serif", serif;
    font-size: 52px;
    line-height: 64px;
}
.dim {
    color: #868686;
}
.bold {
    font-weight: 700;
}
.italic {
    font-style: italic;
}
.under {
    text-decoration: underline;
    text-decoration-thickness: 4px;
    text-underline-offset: 6px;
}
.strike {
    text-decoration: line-through;
    text-decoration-thickness: 4px;
}
.script {
    font-size: 48px;
}
.script sub, .script sup {
    color: #14598c;
    font-size: 32px;
    line-height: 32px;
}
.script sub {
    align-self: flex-end;
}
.script sup {
    align-self: flex-start;
    padding-top: 8px;
}
.combo {
    flex: none;
    display: flex;
    width: 116px;
    height: 44px;
    margin: 0 2px;
    padding: 2px;
    background-color: #fff;
}
.combo-font {
    width: 336px;
}
.combo-line {
    width: 76px;
}
.combo select {
    flex: 1;
    min-width: 0;
    padding: 0 0 2px 4px;
    border: none;
    appearance: none;
    background: #fff;
    color: #000;
    font-family: inherit;
    font-size: 24px;
}
.combo-line select {
    background: linear-gradient(#000, #000) center / 34px 4px no-repeat;
}
.combo-arrow {
    width: 24px;
    display: flex;
    align-items: center;
    justify-content: center;
    background-color: #e6effa;
}
.combo-icon {
    width: 32px;
    height: 32px;
}

/* document area */
.workspace {
    flex: 1;
    min-height: 0;
    display: flex;
    gap: 2px;
    padding-right: 1px;
}
.document {
    flex: 1;
    min-width: 0;
    display: flex;
    flex-direction: column;
}
.doc-tabs {
    flex: none;
    display: flex;
    height: 42px;
    padding: 4px 0 0 8px;
}
.doc-tab {
    display: flex;
    align-items: center;
    gap: 20px;
    padding: 0 10px;
    border-top: 2px solid #fff;
    border-left: 2px solid #fff;
    border-right: 2px solid #000;
    background: linear-gradient(#ffeebb, #ffd773);
    line-height: 32px;
}
.doc-name {
    padding-bottom: 4px;
    font-size: 24px;
    font-weight: 700;
}
.doc-close svg {
    width: 16px;
    height: 16px;
    fill: none;
    stroke: #000;
    stroke-width: 2;
}
.frame {
    flex: 1;
    min-height: 0;
    display: flex;
    border: 2px solid;
    border-color: #a0a0a0 #fff #fff #a0a0a0;
}
.frame-inner {
    flex: 1;
    min-width: 0;
    display: grid;
    grid-template-columns: 36px minmax(0, 1fr) 34px;
    grid-template-rows: 36px minmax(0, 1fr) 34px 44px;
    border: 2px solid;
    border-color: #696969 #e3e3e3 #e3e3e3 #696969;
}
.ruler {
    width: 100%;
    height: 100%;
    font-family: "Liberation Sans", "Noto Sans CJK SC", sans-serif;
    font-size: 24px;
}
.ruler path {
    stroke: #000;
    stroke-width: 2;
    shape-rendering: crispEdges;
}
.ruler-top {
    grid-column: 1 / 4;
    background: linear-gradient(#edf4fe, #dae5f2);
}
.ruler-left {
    grid-row: 2 / 4;
    background: linear-gradient(90deg, #edf4fe, #dae5f2);
}
.canvas {
    position: relative;
    overflow: hidden;
    background: linear-gradient(#c9dbf2, #839fbd);
}
.label-sheet {
    position: absolute;
    left: 958px;
    top: 98px;
    width: 626px;
    height: 937px;
    padding: 50px 27px 24px 28px;
    display: flex;
    flex-direction: column;
    border-radius: 36px;
    background-color: #fff;
    box-shadow: 0 0 16px 10px rgba(80, 90, 105, 0.6);
}
.label-table {
    width: 100%;
    border-collapse: collapse;
    table-layout: fixed;
    border: 5px solid #000;
    font-family: "Liberation Mono", "Noto Sans CJK SC", sans-serif;
    font-size: 28px;
    line-height: 32px;
}
.label-table td {
    height: 41px;
    padding: 0 3px;
    border: 4px solid #000;
}
.hatch {
    flex: 1;
    width: 100%;
    min-height: 0;
    padding: 0 2px;
}
.vscroll {
    display: flex;
    justify-content: center;
    border-left: 2px solid #fff;
    background-color: #f0f0f0;
}
.vthumb {
    width: 4px;
    height: 704px;
    margin-top: 128px;
    background-color: #858585;
}
.record-bar {
    grid-column: 2 / 4;
    display: flex;
    align-items: center;
    gap: 2px;
    border-top: 2px solid #fff;
    background-color: #f0f0f0;
}
.record-bar button {
    width: 32px;
    display: flex;
    justify-content: center;
}
.record-bar svg {
    width: 30px;
    height: 30px;
    fill: #333;
}
.record-bar svg[viewBox="0 0 16 16"] {
    width: 16px;
    height: 16px;
}
.record-label {
    width: 80px;
    padding-left: 4px;
    line-height: 30px;
}
.record-bar input {
    width: 206px;
    height: 28px;
    padding: 0;
    border: none;
    background-color: #fff;
    color: #000;
    font-family: "Liberation Mono", monospace;
    font-size: 20px;
}
.hthumb {
    flex: 1;
    height: 4px;
    margin: 0 70px 0 32px;
    background-color: #858585;
}
.sheet-tabs {
    grid-column: 1 / 4;
    display: flex;
    align-items: flex-start;
    padding-left: 18px;
    background-color: #d0dded;
}
.sheet-tab {
    position: relative;
    height: 37px;
    display: flex;
    align-items: center;
    justify-content: center;
    margin-left: -12px;
    padding-right: 14px;
    line-height: 30px;
}
.sheet-tab span {
    position: relative;
    padding-bottom: 4px;
}
.sheet-active {
    width: 110px;
    margin-left: 0;
    padding-right: 6px;
}
.sheet-form {
    width: 106px;
}
.sheet-new {
    width: 68px;
}
.tab-shape {
    position: absolute;
    inset: 0;
    width: 100%;
    height: 100%;
    fill: #e9f0fa;
    stroke: #a0a0a0;
    stroke-width: 2;
}
.sheet-active .tab-shape {
    fill: #ffe08a;
}
.tab-icon {
    position: relative;
    width: 32px;
    height: 32px;
}

/* alignment bar on the right */
.align-bar {
    flex: none;
    width: 80px;
    margin-top: 6px;
    display: flex;
    flex-direction: column;
    align-items: stretch;
    border-right: 2px solid #8da5c4;
    border-radius: 4px;
    background: linear-gradient(90deg, #edf4fe, #d8e4f2);
}
.align-bar .tool {
    margin-left: 2px;
}
.sep-h {
    flex: none;
    height: 2px;
    margin: 5px 8px;
    background-color: #94abc9;
}
.align-end {
    height: 22px;
    margin-top: auto;
    background: linear-gradient(90deg, #dbe6f3, #8ba1bf);
}
.bar {
    fill: #808080;
}
.box {
    fill: #dadada;
    stroke: #9c9c9c;
}
.arr {
    fill: url(#arrow);
}
.plate {
    fill: #ebebeb;
    stroke: #adadad;
}
.deg {
    fill: #858585;
    stroke: none;
    font-family: "DejaVu Sans", sans-serif;
    font-size: 11px;
    text-anchor: middle;
}

/* status bar */
.statusbar {
    flex: none;
    height: 44px;
    display: flex;
    align-items: center;
    border-bottom: 2px solid #9db8bd;
    background: linear-gradient(#dfe9f6, #c8d5e5 50%, #b1c3da);
    font-size: 24px;
}
.status-cell {
    height: 40px;
    display: flex;
    align-items: center;
    gap: 10px;
}
.status-cell svg {
    width: 32px;
    height: 32px;
}
.status-printer {
    width: 427px;
    padding-left: 7px;
}
.status-size {
    flex: 1;
    padding-left: 8px;
    border-left: 2px solid #94abc9;
}
.status-size span + span {
    margin-left: 6px;
}
.status-zoom {
    width: 206px;
    padding-left: 10px;
    border-left: 2px solid #94abc9;
}
.status-zoom .tri {
    width: 16px;
    height: 10px;
    margin-left: 18px;
}
.taskbar {
    flex: none;
    height: 13px;
    padding: 8px 0 0 380px;
    background-color: #c2f0ea;
}
.taskbar-item {
    display: block;
    width: 76px;
    height: 5px;
    border-radius: 5px 5px 0 0;
    background-color: #e2f7f3;
}

.ime {
    position: absolute;
    right: 9px;
    bottom: 53px;
    width: 504px;
    height: 61px;
    display: flex;
    align-items: center;
    padding-right: 5px;
    border-radius: 12px;
    background-color: #fff;
    box-shadow: 0 1px 6px rgba(0, 0, 0, 0.3);
}
.ime button {
    width: 60px;
    display: flex;
    justify-content: center;
}
.ime .ime-logo {
    flex: 1;
}
.ime svg {
    width: 36px;
    height: 36px;
    overflow: visible;
}
.ime .ime-pet {
    width: 44px;
    height: 44px;
}
.ime-sep {
    width: 2px;
    height: 36px;
    margin-right: 4px;
    background-color: #c8c8c8;
}
.ime-zh {
    font-size: 34px;
    font-weight: 500;
    line-height: 48px;
}
```
FILE: rulers.js
```js
const PX_PER_10MM = 104.2;
const RULER = 36;

// tick length depends on its place within the 10 mm step
function tickLength(mm) {
    if (mm > 139) return 10;
    if (mm % 10 === 0) return 34;
    if (mm % 5 === 0) return 20;
    return 10;
}

function drawRuler(svg, vertical, origin, start, cursor) {
    const length = vertical ? svg.clientHeight : svg.clientWidth;
    const step = PX_PER_10MM / 10;
    let d = vertical ? `M35 0V${length}` : `M${start} 35H${length}`;
    let labels = '';

    for (let mm = Math.ceil((start - origin) / step); origin + mm * step < length; mm++) {
        const pos = Math.round(origin + mm * step);
        const len = tickLength(mm);
        d += vertical ? `M${RULER} ${pos}h-${len}` : `M${pos} ${RULER}v-${len}`;
        if (mm % 10 !== 0) continue;
        if (vertical && mm >= 0) {
            labels += `<text transform="translate(26 ${pos + 6}) rotate(-90)" text-anchor="end">${mm}</text>`;
        } else if (!vertical && mm > -90 && mm < 140) {
            labels += `<text x="${pos - 4}" y="24" text-anchor="end">${mm}</text>`;
        }
    }
    d += vertical ? `M2 ${cursor}H36` : `M${cursor} 2V36`;
    if (!vertical) labels += `<text x="${length - 79}" y="24">毫米</text>`;
    svg.innerHTML = `<path d="${d}" fill="none"/>${labels}`;
}

function drawRulers() {
    drawRuler(document.getElementById('ruler-top'), false, 995, 37, 605);
    drawRuler(document.getElementById('ruler-left'), true, 99, 0, 653);
}

drawRulers();
window.addEventListener('resize', drawRulers);
```
